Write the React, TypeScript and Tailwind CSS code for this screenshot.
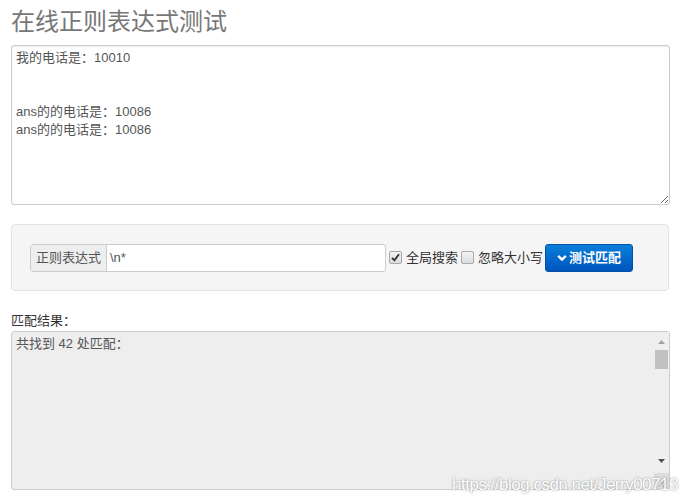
const font = { fontFamily: '"Liberation Sans", "Noto Sans CJK SC", sans-serif' };

const sample = '我的电话是：10010\n\n\nans的的电话是：10086\nans的的电话是：10086';

const Box = ({ checked }: { checked?: boolean }) => (
  <span className="flex h-[13px] w-[13px] items-center justify-center rounded-[2px] border border-[#a9a9a9] bg-gradient-to-b from-[#f4f4f4] to-[#dcdcdc]">
    {checked && (
      <svg width="9" height="9" viewBox="0 0 9 9">
        <path d="M1 4.8 L3.4 7.4 L8 1.2" fill="none" stroke="#333" strokeWidth="1.8" />
      </svg>
    )}
  </span>
);

const Grip = () => (
  <svg width="9" height="9" viewBox="0 0 9 9" className="absolute bottom-[2px] right-[2px]">
    <path d="M8.5 1 L1 8.5 M8.5 5 L5 8.5" stroke="#666" strokeWidth="1" strokeDasharray="1 1" />
  </svg>
);

export default function App() {
  return (
    <div className="relative h-[502px] w-[685px] overflow-hidden bg-white px-[11px] pt-[8px] text-[#555]" style={font}>
      <h1 className="text-[24px] leading-[28px] text-[#777]">在线正则表达式测试</h1>

      <textarea
        readOnly
        defaultValue={sample}
        className="mt-[9px] block h-[160px] w-[659px] rounded-[3px] border border-[#ccc] px-[4px] py-[3px] text-[13px] leading-[18px] text-[#555] shadow-[inset_0_1px_1px_rgba(0,0,0,0.075)] outline-none"
        style={font}
      />

      <div className="mt-[19px] flex h-[67px] w-[658px] items-center rounded-[4px] border border-[#e3e3e3] bg-[#f5f5f5] pl-[18px]">
        <div className="flex h-[28px] w-[356px] rounded-[3px] border border-[#ccc] bg-white">
          <span className="flex w-[76px] items-center justify-center border-r border-[#ccc] bg-[#eee] text-[13px] text-[#555]">正则表达式</span>
          <span className="flex items-center pl-[3px] text-[13px] text-[#555]">\n*</span>
        </div>
        <label className="ml-[3px] flex items-center gap-[4px] text-[13px] text-[#333]">
          <Box checked />
          全局搜索
        </label>
        <label className="ml-[3px] flex items-center gap-[4px] text-[13px] text-[#333]">
          <Box />
          忽略大小写
        </label>
        <button className="ml-[2px] flex h-[28px] w-[88px] items-center justify-center gap-[2px] rounded-[3px] border border-[#0450a8] bg-gradient-to-b from-[#0b7fd9] to-[#0255bd] text-[13px] font-bold text-white">
          <svg width="10" height="8" viewBox="0 0 10 8">
            <path d="M1.2 1.8 L5 5.6 L8.8 1.8" fill="none" stroke="#fff" strokeWidth="2.4" />
          </svg>
          测试匹配
        </button>
      </div>

      <div className="mt-[21px] text-[13px] leading-[18px] text-[#333]">匹配结果：</div>

      <div className="relative mt-[1px] flex h-[159px] w-[659px] rounded-[3px] border border-[#ccc] bg-[#eee]">
        <div className="flex-1 px-[4px] py-[3px] text-[13px] leading-[18px] text-[#555]">共找到 42 处匹配：</div>
        <div className="flex w-[15px] flex-col items-center bg-[#efefef]">
          <svg width="9" height="15" viewBox="0 0 9 15" className="mt-[2px]">
            <path d="M1 10 L4.5 6 L8 10 Z" fill="#a3a3a3" />
          </svg>
          <div className="mt-[1px] h-[19px] w-[13px] bg-[#c1c1c1]" />
          <div className="flex-1" />
          <svg width="9" height="15" viewBox="0 0 9 15">
            <path d="M1 5 L4.5 9 L8 5 Z" fill="#505050" />
          </svg>
          <div className="mt-[4px] h-[16px] w-[15px] bg-[#dcdcdc]" />
        </div>
        <Grip />
      </div>

      <div className="pointer-events-none absolute left-[452px] top-[472px] whitespace-nowrap text-[17px] tracking-[-0.5px] text-white [text-shadow:0_0_2px_#777]">
        https://blog.csdn.net/Jerry00713
      </div>
    </div>
  );
}
